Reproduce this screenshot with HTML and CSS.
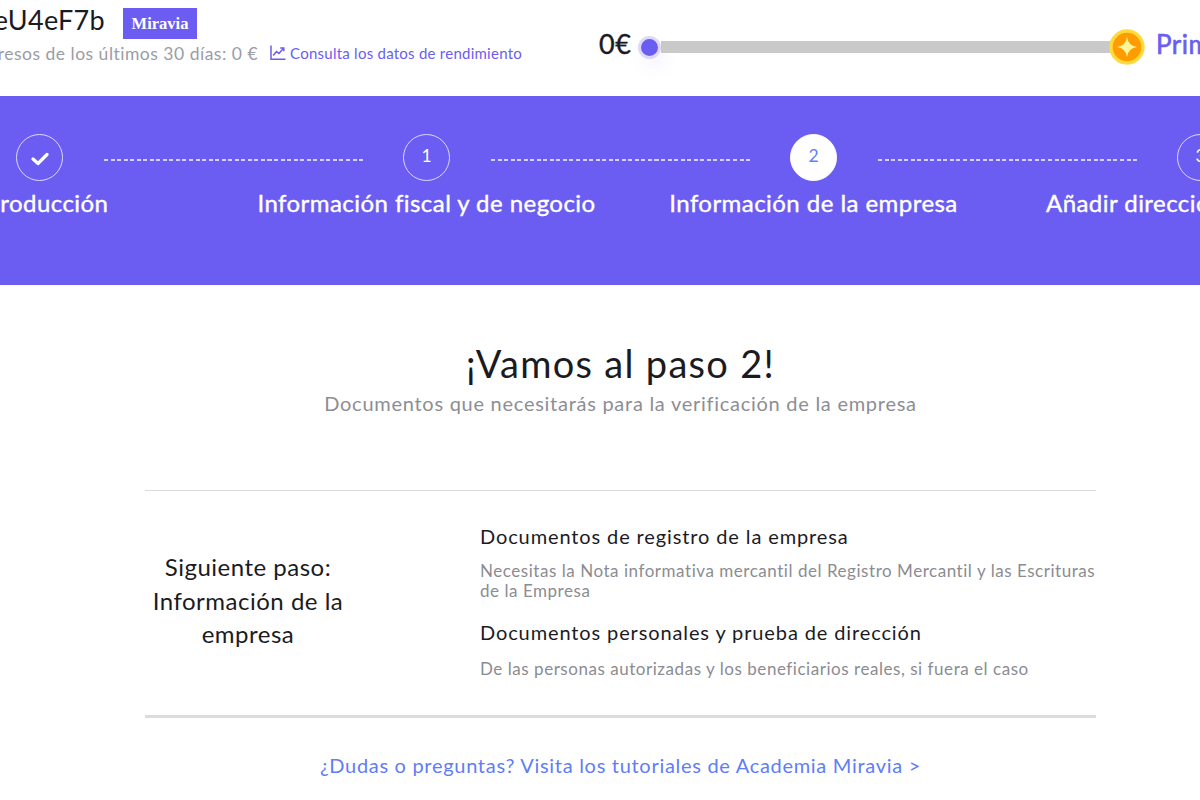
FILE: index.html
```html
<!DOCTYPE html>
<html lang="es">
  <head>
    <meta charset="utf-8">
    <title>Miravia</title>
    <link rel="stylesheet" href="styles.css">
  </head>
  <body>
    <header class="header">
      <div class="account">
        <div class="account-name">
          <span class="name">eU4eF7b</span>
          <span class="badge">Miravia</span>
        </div>
        <div class="account-stats">
          <span class="income">Ingresos de los últimos 30 días: 0 €</span>
          <svg class="chart-icon" viewBox="0 0 16 16">
            <path d="M1 0.5V14.3H15.5"/>
            <path d="M3.2 10.5L6.5 6.5L9 8.5L13.3 3.5M10.2 3H13.8V6.3"/>
          </svg>
          <a class="stats-link">Consulta los datos de rendimiento</a>
        </div>
      </div>
      <div class="progress">
        <span class="amount">0€</span>
        <span class="dot"></span>
        <span class="bar"></span>
        <svg class="coin" viewBox="0 0 36 36">
          <circle cx="18" cy="18" r="16" fill="#ff9d00" stroke="#ffda3d" stroke-width="3.4"/>
          <path d="M18 8Q19.2 16.8 28 18Q19.2 19.2 18 28Q16.8 19.2 8 18Q16.8 16.8 18 8Z" fill="#fff59a"/>
        </svg>
        <span class="goal">Primera</span>
      </div>
    </header>

    <nav class="stepper">
      <div class="track">
        <span class="circle">
          <svg class="check-icon" viewBox="0 0 18 14"><path d="M2 7L7 11.5L16 2.5"/></svg>
        </span>
        <span class="line"></span>
        <span class="circle">1</span>
        <span class="line"></span>
        <span class="circle active">2</span>
        <span class="line"></span>
        <span class="circle">3</span>
      </div>
      <div class="labels">
        <span class="label">Introducción</span>
        <span class="label">Información fiscal y de negocio</span>
        <span class="label">Información de la empresa</span>
        <span class="label last">Añadir direcciones</span>
      </div>
    </nav>

    <main class="content">
      <h1 class="title">¡Vamos al paso 2!</h1>
      <p class="subtitle">Documentos que necesitarás para la verificación de la empresa</p>

      <section class="panel">
        <h2 class="next-step">Siguiente paso:<br>Información de la<br>empresa</h2>
        <div class="documents">
          <h3 class="doc-title">Documentos de registro de la empresa</h3>
          <p class="doc-text">Necesitas la Nota informativa mercantil del Registro Mercantil y las Escrituras<br>de la Empresa</p>
          <h3 class="doc-title">Documentos personales y prueba de dirección</h3>
          <p class="doc-text last">De las personas autorizadas y los beneficiarios reales, si fuera el caso</p>
        </div>
      </section>

      <a class="help">¿Dudas o preguntas? Visita los tutoriales de Academia Miravia &gt;</a>
    </main>
  </body>
</html>
```
FILE: styles.css
```css
* {
  margin: 0;
  padding: 0;
  box-sizing: border-box;
}

body {
  width: 1200px;
  height: 800px;
  overflow: hidden;
  background: #fff;
  color: #1b1b1f;
  font-family: Lato, "Liberation Sans", sans-serif;
  white-space: nowrap;
}

.header {
  display: flex;
  height: 96px;
}

.account {
  flex: none;
  width: 522px;
  padding-top: 1px;
}

.account-name {
  display: flex;
  justify-content: flex-end;
  gap: 18px;
  width: 197px;
  height: 38px;
}

.name {
  flex: none;
  font-size: 27px;
  line-height: 38px;
  letter-spacing: 0.3px;
}

.badge {
  flex: none;
  width: 74px;
  height: 31px;
  margin-top: 7px;
  background: #6b5df2;
  color: #fff;
  font: bold 16.5px/31px "Liberation Serif", serif;
  text-align: center;
}

.account-stats {
  display: flex;
  justify-content: flex-end;
  align-items: center;
  height: 28px;
}

.income {
  flex: none;
  color: #9b9ca6;
  font-size: 17.5px;
  letter-spacing: 0.5px;
}

.chart-icon {
  flex: none;
  width: 16px;
  height: 16px;
  margin: 0 4px 0 12px;
  fill: none;
  stroke: #6b5df2;
  stroke-width: 1.5;
}

.stats-link {
  flex: none;
  color: #6b5df2;
  font-size: 15px;
  line-height: 30px;
  letter-spacing: 0.25px;
}

.progress {
  display: flex;
  align-items: center;
  height: 94px;
  padding-left: 77px;
}

.amount {
  width: 39px;
  font-size: 27px;
  line-height: 32px;
  margin-top: -7px;
  letter-spacing: 0.6px;
  -webkit-text-stroke: 0.4px;
}

.dot {
  width: 23px;
  height: 23px;
  border: 3px solid #ded9fc;
  border-radius: 50%;
  background: #6b5df2;
  box-shadow: 5px 10px 16px rgba(107, 93, 242, 0.06);
}

.bar {
  flex: none;
  width: 450px;
  height: 12px;
  background: #c9c9c9;
}

.coin {
  flex: none;
  width: 36px;
  height: 36px;
  margin-left: -2px;
}

.goal {
  margin: -7px 0 0 11px;
  color: #6b5df2;
  font-size: 26px;
  letter-spacing: 0.5px;
  -webkit-text-stroke: 0.6px;
}

.stepper {
  height: 189px;
  padding-top: 38px;
  background: #6b5df2;
  color: #fff;
}

.track {
  display: flex;
  align-items: center;
  margin-left: 16px;
}

.circle {
  display: flex;
  flex: none;
  align-items: center;
  justify-content: center;
  width: 47px;
  height: 47px;
  border: 1.5px solid #dcd9fd;
  border-radius: 50%;
  font-size: 17.5px;
  padding-bottom: 4px;
}

.circle.active {
  border-color: #fff;
  background: #fff;
  color: #5f84f5;
}

.check-icon {
  width: 18px;
  height: 14px;
  margin-top: 6px;
  fill: none;
  stroke: #fff;
  stroke-width: 3.2;
  stroke-linecap: round;
  stroke-linejoin: round;
}

.line {
  flex: none;
  width: 259px;
  height: 2px;
  margin: 4px 40px 0 41px;
  background: repeating-linear-gradient(to right, #d5d1fc 0 4px, transparent 4px 6.54px);
}

.labels {
  display: flex;
  margin: 4px 0 0 -154px;
}

.label {
  flex: none;
  width: 387px;
  font-size: 24px;
  line-height: 36px;
  letter-spacing: 0.45px;
  text-align: center;
  -webkit-text-stroke: 0.4px;
}

.label.last {
  padding-left: 39px;
  text-align: left;
}

.content {
  width: 951px;
  margin-left: 145px;
  padding-top: 55px;
  text-align: center;
}

.title {
  font-size: 38px;
  font-weight: 400;
  line-height: 46px;
  letter-spacing: 1.3px;
}

.subtitle {
  margin-top: 3px;
  color: #8d8e93;
  font-size: 20px;
  line-height: 28px;
  letter-spacing: 0.73px;
}

.panel {
  display: flex;
  gap: 129px;
  height: 228px;
  margin-top: 73px;
  border-top: 1px solid #dcdcdc;
  border-bottom: 3px solid #dcdcdc;
}

.next-step {
  width: 206px;
  padding-top: 59px;
  font-size: 24px;
  font-weight: 400;
  line-height: 33.5px;
  letter-spacing: 0.5px;
}

.documents {
  padding-top: 30px;
  text-align: left;
}

.doc-title {
  font-size: 20px;
  font-weight: 400;
  line-height: 30px;
  letter-spacing: 0.88px;
}

.doc-text {
  margin: 10px 0 16px;
  color: #8b8c92;
  font-size: 17px;
  line-height: 20px;
  letter-spacing: 0.54px;
}

.doc-text.last {
  margin-top: 12px;
}

.help {
  display: block;
  margin-top: 32px;
  color: #5f7df7;
  font-size: 20px;
  line-height: 30px;
  letter-spacing: 0.7px;
}
```
